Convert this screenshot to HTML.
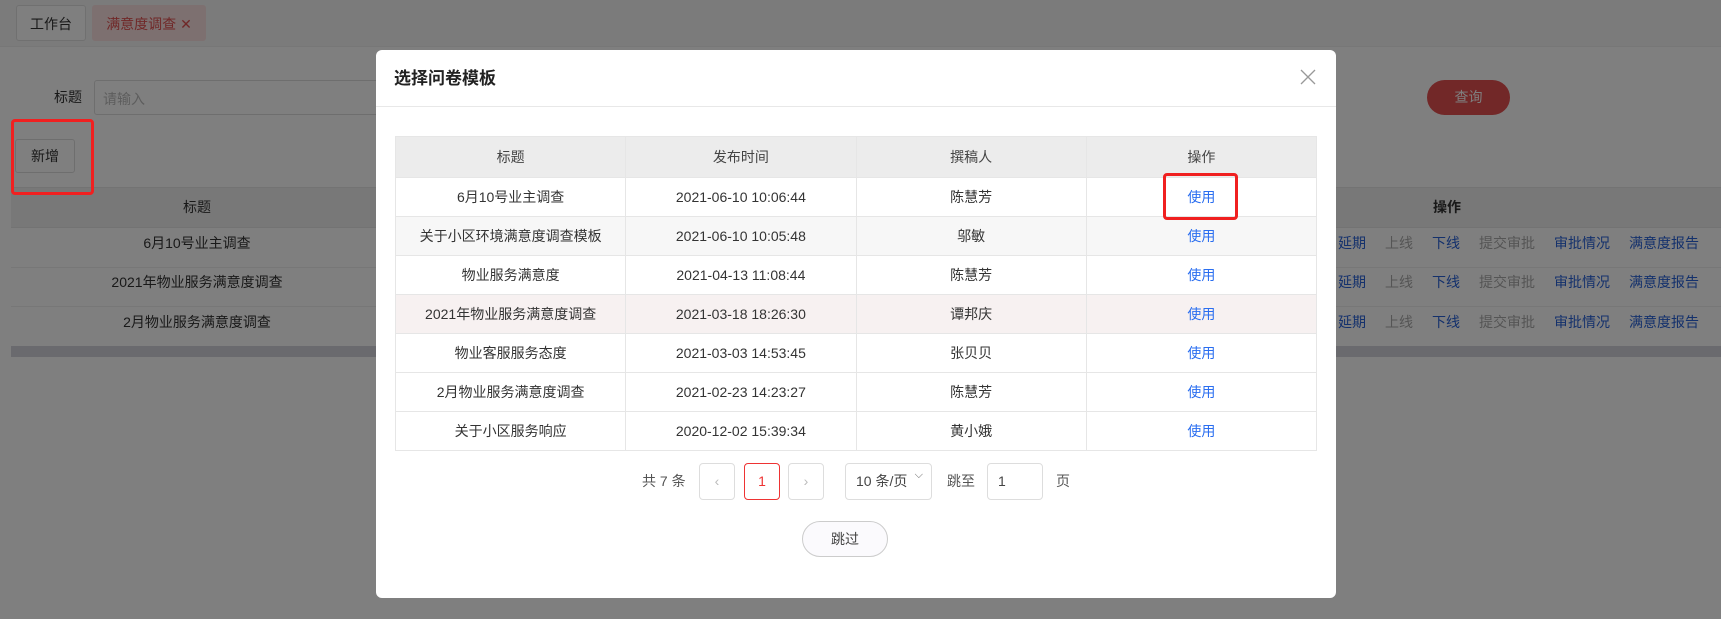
<!DOCTYPE html>
<html><head><meta charset="utf-8"><style>
*{box-sizing:border-box;margin:0;padding:0}
body{width:1721px;height:619px;overflow:hidden;position:relative;background:#fff;font-family:"Liberation Sans","Noto Sans CJK SC",sans-serif;font-size:14px;color:#333}
.abs{position:absolute}
.tab{position:absolute;top:5px;height:36px;line-height:36px;text-align:center;border:1px solid #e0e0e0;border-radius:3px;background:#fff}
.ov{position:absolute;left:0;top:0;width:1721px;height:619px;background:rgba(0,0,0,.5)}
.c{position:absolute;transform:translate(-50%,-50%);white-space:nowrap}
.modal{position:absolute;left:376px;top:50px;width:960px;height:548px;background:#fff;border-radius:6px}
table{border-collapse:collapse;table-layout:fixed}
.mt{position:absolute;left:19px;top:86px;width:922px;border:1px solid #ddd}
.mt td,.mt th{border:1px solid #e6e6e6;text-align:center;height:39px;font-weight:normal;color:#333}
.mt th{background:#ececec;height:41px;color:#444}
.mt a{color:#2a6ef0;text-decoration:none}
.pb{position:absolute;top:413px;height:37px;border:1px solid #ddd;border-radius:4px;line-height:35px;text-align:center;color:#666;font-size:14px}
.lk{color:#2962d9}
.gr{color:#aaa}
.ops{position:absolute;left:1338px;white-space:nowrap;transform:translateY(-50%)}
.ops span{margin-right:19px}
</style></head><body>
<div class="abs" style="left:0;top:0;width:1721px;height:47px;background:#f7f7f7;border-bottom:1px solid #eee"></div>
<div class="tab" style="left:16px;width:70px;color:#333">工作台</div>
<div class="tab" style="left:92px;width:114px;background:#fbe0e0;border-color:#fbe0e0;color:#e05050">满意度调查 ✕</div>
<div class="abs" style="left:54px;top:87px">标题</div>
<div class="abs" style="left:94px;top:80px;width:1100px;height:35px;border:1px solid #ddd;border-radius:3px;padding:8px;color:#bbb">请输入</div>
<div class="abs" style="left:1427px;top:80px;width:83px;height:35px;border-radius:18px;background:#e45050;color:#fff;text-align:center;line-height:35px">查询</div>
<div class="abs" style="left:15px;top:139px;width:60px;height:34px;border:1px solid #ddd;border-radius:3px;text-align:center;line-height:32px">新增</div>
<div class="abs" style="left:11px;top:187px;width:1710px;height:40px;background:#f0f0f0;border-top:1px solid #e6e6e6"></div>
<div class="c" style="left:197px;top:207px">标题</div>
<div class="c" style="left:1447px;top:207px;font-weight:bold">操作</div>
<div class="abs" style="left:11px;top:227px;width:1710px;height:119px;border-top:1px solid #e6e6e6">
<div style="height:40px;border-bottom:1px solid #eee"></div><div style="height:39px;border-bottom:1px solid #eee"></div></div>
<div class="c" style="left:197px;top:243px">6月10号业主调查</div>
<div class="c" style="left:197px;top:282px">2021年物业服务满意度调查</div>
<div class="c" style="left:197px;top:322px">2月物业服务满意度调查</div>
<div class="abs" style="left:11px;top:346px;width:1710px;height:11px;background:#d5d5dc"></div>
<div class="ops" style="top:243px"><span class="lk">延期</span><span class="gr">上线</span><span class="lk">下线</span><span class="gr">提交审批</span><span class="lk">审批情况</span><span class="lk">满意度报告</span></div>
<div class="ops" style="top:282px"><span class="lk">延期</span><span class="gr">上线</span><span class="lk">下线</span><span class="gr">提交审批</span><span class="lk">审批情况</span><span class="lk">满意度报告</span></div>
<div class="ops" style="top:322px"><span class="lk">延期</span><span class="gr">上线</span><span class="lk">下线</span><span class="gr">提交审批</span><span class="lk">审批情况</span><span class="lk">满意度报告</span></div>
<div class="ov"></div>
<div class="abs" style="left:11px;top:119px;width:83px;height:76px;border:3px solid #f02020;border-radius:4px"></div>

<div class="modal">
<div class="abs" style="left:18px;top:14px;font-size:17px;font-weight:bold;color:#222">选择问卷模板</div>
<svg class="abs" style="left:924px;top:19px" width="16" height="16" viewBox="0 0 16 16"><path d="M1 1L15 15M15 1L1 15" stroke="#999" stroke-width="1.3"/></svg>
<div class="abs" style="left:0;top:56px;width:960px;height:1px;background:#e8e8e8"></div>
<table class="mt">
<tr><th>标题</th><th>发布时间</th><th>撰稿人</th><th>操作</th></tr>
<tr><td>6月10号业主调查</td><td>2021-06-10 10:06:44</td><td>陈慧芳</td><td><a>使用</a></td></tr>
<tr style="background:#f7f7f7"><td>关于小区环境满意度调查模板</td><td>2021-06-10 10:05:48</td><td>邬敏</td><td><a>使用</a></td></tr>
<tr><td>物业服务满意度</td><td>2021-04-13 11:08:44</td><td>陈慧芳</td><td><a>使用</a></td></tr>
<tr style="background:#f7f1f1"><td>2021年物业服务满意度调查</td><td>2021-03-18 18:26:30</td><td>谭邦庆</td><td><a>使用</a></td></tr>
<tr><td>物业客服服务态度</td><td>2021-03-03 14:53:45</td><td>张贝贝</td><td><a>使用</a></td></tr>
<tr><td>2月物业服务满意度调查</td><td>2021-02-23 14:23:27</td><td>陈慧芳</td><td><a>使用</a></td></tr>
<tr><td>关于小区服务响应</td><td>2020-12-02 15:39:34</td><td>黄小娥</td><td><a>使用</a></td></tr>
</table>
<div class="abs" style="left:787px;top:123px;width:75px;height:47px;border:3px solid #f02020;border-radius:4px"></div>
<div class="abs" style="left:266px;top:421px;color:#555">共 7 条</div>
<div class="pb" style="left:323px;width:36px;color:#bbb">‹</div>
<div class="pb" style="left:368px;width:36px;border-color:#e33;color:#e33">1</div>
<div class="pb" style="left:412px;width:36px;color:#bbb">›</div>
<div class="pb" style="left:469px;width:87px;text-align:left;padding-left:10px;color:#444">10 条/页<span style="position:absolute;right:8px;top:-6px;font-size:11px;color:#666">⌵</span></div>
<div class="abs" style="left:571px;top:421px;color:#555">跳至</div>
<div class="pb" style="left:611px;width:56px;text-align:left;padding-left:10px;color:#444">1</div>
<div class="abs" style="left:680px;top:421px;color:#555">页</div>
<div class="abs" style="left:426px;top:471px;width:86px;height:36px;border:1px solid #ccc;border-radius:18px;background:#fbfafd;text-align:center;line-height:34px;color:#444">跳过</div>
</div>
</body></html>
